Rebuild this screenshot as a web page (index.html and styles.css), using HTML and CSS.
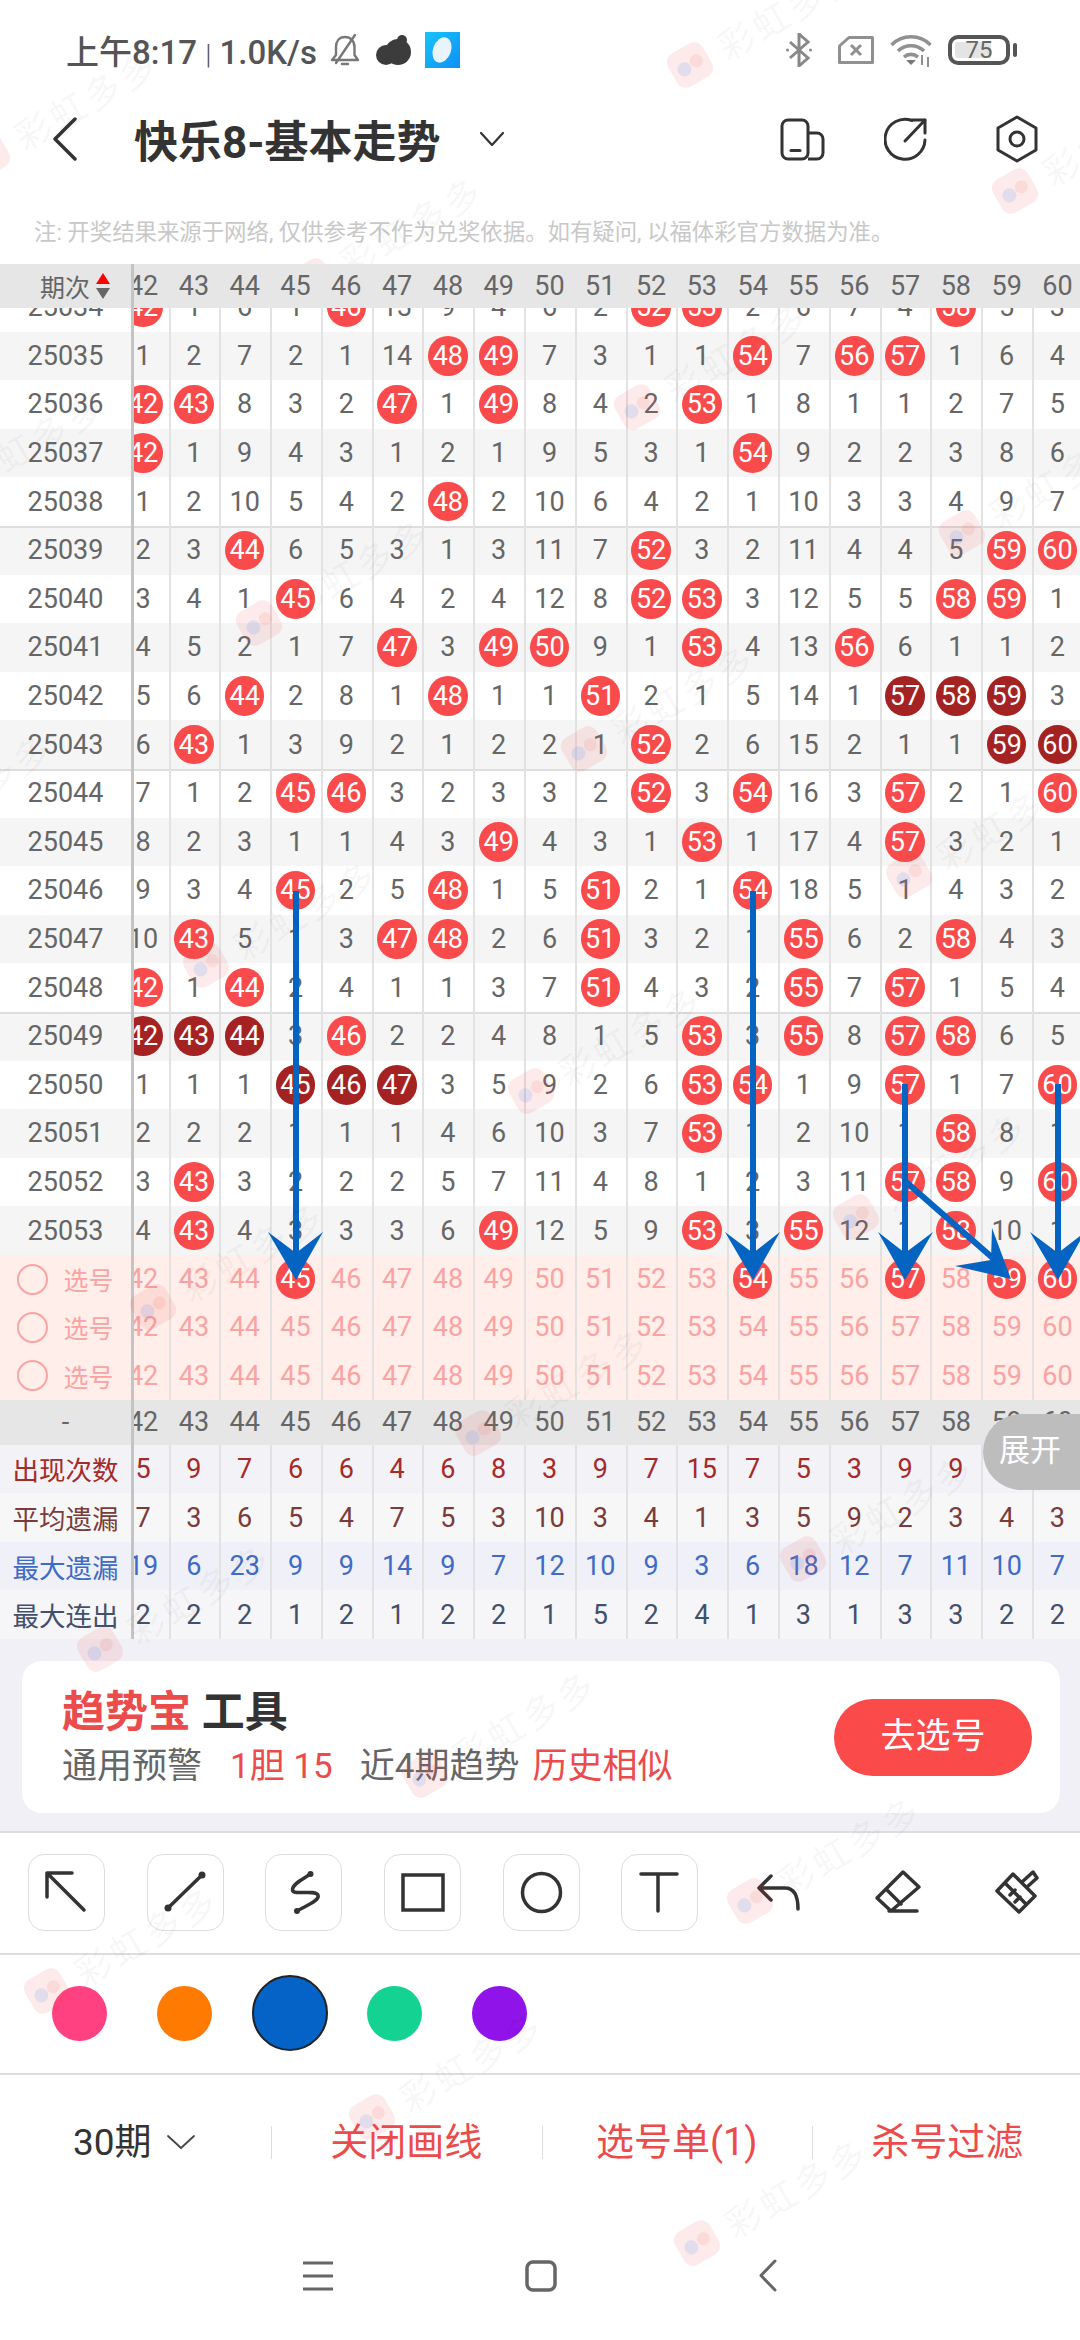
FILE: index.html
```html
<!DOCTYPE html>
<html lang="zh-CN">
<head>
    <meta charset="UTF-8">
    <title>快乐8-基本走势</title>
    <link rel="stylesheet" href="styles.css">
</head>
<body>

    <div class="statusbar">
        <span class="status-text">上午8:17 <span class="status-sep">|</span> 1.0K/s</span>
        <svg class="ic-bell" width="30" height="34" viewBox="0 0 30 34" fill="none" stroke="#777" stroke-width="2.400" stroke-linejoin="round" stroke-linecap="round">
            <path d="M2 27h26l-3.500-5V14c0-6-4-10-9.500-10S6 8 6 14v8z"/>
            <path d="M12 31h6"/>
            <path d="M25 2L6 30"/>
        </svg>
        <svg class="ic-cloud" width="36" height="30" viewBox="0 0 36 30" fill="#3c3c3c">
            <circle cx="11" cy="20" r="10"/>
            <circle cx="23" cy="17" r="13"/>
            <circle cx="27" cy="5" r="5"/>
        </svg>
        <svg class="ic-app" width="35" height="36" viewBox="0 0 35 36">
            <defs>
                <linearGradient id="appfill" x1="0" y1="0" x2="1" y2="1">
                    <stop offset="0" stop-color="#18c4f8"/>
                    <stop offset="1" stop-color="#0f8ff5"/>
                </linearGradient>
            </defs>
            <rect width="35" height="36" fill="url(#appfill)"/>
            <ellipse cx="17" cy="18" rx="9" ry="13" transform="rotate(20 17 18)" fill="#e8f5fe"/>
        </svg>

        <div class="status-right">
            <svg class="ic-bt" width="28" height="34" viewBox="0 0 28 34" fill="none" stroke="#888" stroke-width="3">
                <path d="M5 9l18 16-9 8V1l9 8L5 25"/>
                <circle cx="2.500" cy="17" r="1.500" fill="#888" stroke="none"/>
                <circle cx="25.500" cy="17" r="1.500" fill="#888" stroke="none"/>
            </svg>
            <svg width="36" height="28" viewBox="0 0 36 28" fill="none" stroke="#909090" stroke-width="3" stroke-linejoin="round">
                <path d="M11 1.500h23.500v25H1.500V10z"/>
                <path d="M13 9l10 10M23 9L13 19"/>
            </svg>
            <svg width="42" height="34" viewBox="0 0 42 34" fill="none" stroke="#909090" stroke-width="3.600">
                <path d="M1.500 12C12 1 30 1 40.500 12"/>
                <path d="M8 18c7-7 19-7 26 0"/>
                <path d="M14 24c4-3.500 10-3.500 14 0"/>
                <path d="M21 31.500l-4-4h8z" fill="#777" stroke="#777" stroke-width="1"/>
                <path d="M32 22v10M38 24v10" stroke-width="2"/>
            </svg>
            <div class="battery">75</div>
        </div>
    </div>

    <div class="topnav">
        <svg class="ic-back" width="30" height="44" viewBox="0 0 30 44" fill="none" stroke="#333" stroke-width="3.500" stroke-linecap="round" stroke-linejoin="round">
            <path d="M25 2L5 22l20 20"/>
        </svg>
        <h1 class="page-title">快乐8-基本走势</h1>
        <svg class="ic-caret" width="26" height="16" viewBox="0 0 26 16" fill="none" stroke="#333" stroke-width="2.200" stroke-linecap="round" stroke-linejoin="round">
            <path d="M2 2l11 12L24 2"/>
        </svg>
        <div class="topnav-right">
            <svg width="46" height="44" viewBox="0 0 46 44" fill="none" stroke="#333" stroke-width="3" stroke-linejoin="round">
                <rect x="2" y="3" width="26" height="39" rx="6"/>
                <path d="M28 16h9a6 6 0 0 1 6 6v14a6 6 0 0 1-6 6H28"/>
                <path d="M11 33.500h9" stroke-linecap="round"/>
            </svg>
            <svg width="46" height="46" viewBox="0 0 46 46" fill="none" stroke="#333" stroke-width="3" stroke-linecap="round" stroke-linejoin="round">
                <path d="M28 4.500A20 20 0 1 0 41 24"/>
                <path d="M21 25L41 4"/>
                <path d="M28 4h13v13"/>
            </svg>
            <svg class="ic-hex" width="44" height="48" viewBox="0 0 44 48" fill="none" stroke="#333" stroke-width="3" stroke-linejoin="round">
                <path d="M22 2l19 11v22L22 46 3 35V13z"/>
                <circle cx="22" cy="24" r="7"/>
            </svg>
        </div>
    </div>

    <p class="notice">注: 开奖结果来源于网络, 仅供参考不作为兑奖依据。如有疑问, 以福体彩官方数据为准。</p>

    <div class="chart">
        <div id="chartHead" class="row row-head"></div>
        <div id="chartBody" class="chart-body"></div>
        <div class="expand">展开</div>
    </div>

    <div class="promo-wrap">
        <div class="promo">
            <div class="promo-info">
                <div class="promo-title"><span class="red">趋势宝</span> 工具</div>
                <div class="promo-sub">
                    <span>通用预警</span>
                    <span class="red promo-num">1胆 15</span>
                    <span>近4期趋势</span>
                    <span class="red">历史相似</span>
                </div>
            </div>
            <div class="promo-btn">去选号</div>
        </div>
    </div>

    <div class="tools">
        <div class="tool boxed">
            <svg viewBox="0 0 77 77"><path d="M19 43V19h25M19 19l37 37"/></svg>
        </div>
        <div class="tool boxed">
            <svg viewBox="0 0 77 77"><path d="M55 21L21 54"/><circle class="dot" cx="55" cy="21" r="3.500"/><circle class="dot" cx="21" cy="54" r="3.500"/></svg>
        </div>
        <div class="tool boxed">
            <svg viewBox="0 0 77 77"><path d="M45.500 20C38 25 27 30 27.500 36 28 42 50 35 53 41 55 47 40 52 32 57"/><circle class="dot" cx="45.500" cy="20" r="3"/><circle class="dot" cx="32" cy="57" r="3"/></svg>
        </div>
        <div class="tool boxed">
            <svg viewBox="0 0 77 77"><rect class="sharp" x="19" y="21" width="40" height="35"/></svg>
        </div>
        <div class="tool boxed">
            <svg viewBox="0 0 77 77"><circle cx="38.500" cy="38.500" r="19"/></svg>
        </div>
        <div class="tool boxed">
            <svg viewBox="0 0 77 77"><path d="M20 20h36M37 20v37"/></svg>
        </div>
        <div class="tool">
            <svg viewBox="0 0 77 77"><path d="M31 22L19 34l12 12M19 34h26c8 0 13 6 13 21"/></svg>
        </div>
        <div class="tool">
            <svg viewBox="0 0 77 77"><path d="M44 18l16 15-28 24-14-13zM28 36l14 14M30 57h28"/></svg>
        </div>
        <div class="tool">
            <svg viewBox="0 0 77 77"><path d="M35 20l22 22-16 16-22-21zM44 28l11-10 4 6-10 9M27 29l21 21M32 41l5-5M37 48l5-5"/></svg>
        </div>
    </div>

    <div class="swatches">
        <span class="swatch c-pink"></span>
        <span class="swatch c-orange"></span>
        <span class="swatch c-blue active"></span>
        <span class="swatch c-green"></span>
        <span class="swatch c-purple"></span>
    </div>

    <div class="actions">
        <div class="action period">30期
            <svg width="30" height="16" viewBox="0 0 30 16" fill="none" stroke="#444" stroke-width="1.800" stroke-linecap="round" stroke-linejoin="round"><path d="M2 2l13 12L28 2"/></svg>
        </div>
        <div class="action red">关闭画线</div>
        <div class="action red">选号单(1)</div>
        <div class="action red">杀号过滤</div>
    </div>

    <div class="navbar">
        <svg width="32" height="30" viewBox="0 0 32 30" fill="none" stroke="#666" stroke-width="3">
            <path d="M1 2h30M1 15h30M1 28h30"/>
        </svg>
        <svg width="32" height="32" viewBox="0 0 32 32" fill="none" stroke="#666" stroke-width="3.500">
            <rect x="2" y="2" width="28" height="28" rx="6"/>
        </svg>
        <svg class="ic-navback" width="20" height="33" viewBox="0 0 20 33" fill="none" stroke="#666" stroke-width="3" stroke-linecap="round" stroke-linejoin="round">
            <path d="M17 2L3 16.500 17 31"/>
        </svg>
    </div>

    <!-- 画线 -->
    <svg class="drawing" width="1080" height="2340" viewBox="0 0 1080 2340">
        <g stroke="#0563c1" stroke-width="6" fill="#0563c1">
            <path d="M296 891V1255"/>
            <path d="M753 891V1255"/>
            <path d="M905 1084V1255"/>
            <path d="M1058 1084V1255"/>
            <path d="M905 1181L995 1260"/>
        </g>
        <g fill="#0563c1">
            <path d="M268 1232L296 1253 323 1232 296 1280z"/>
            <path d="M725 1232L753 1253 780 1232 753 1280z"/>
            <path d="M878 1232L905 1253 933 1232 905 1280z"/>
            <path d="M1030 1232L1058 1253 1085 1232 1058 1280z"/>
            <path d="M992 1228L991 1260 955 1266 1011 1279z"/>
        </g>
    </svg>

    <div id="watermarks" class="watermarks"></div>

    <script src="script.js"></script>
</body>
</html>
```

FILE: styles.css
```css
body {
    margin: 0;
    width: 1080px;
    height: 2340px;
    overflow: hidden;
    position: relative;
    background-color: #fff;
    color: #333;
    font-family: Roboto, "Noto Sans CJK SC", sans-serif;
}

.red {
    color: #ec4b4b;
}

/* 状态栏 */
.statusbar {
    height: 100px;
    display: flex;
    align-items: center;
    padding: 0 70px 0 66px;
    box-sizing: border-box;
}
.status-text {
    font-size: 33px;
    font-weight: 500;
    color: #555;
    white-space: nowrap;
    width: 254px;
}
.status-sep {
    font-weight: 300;
    font-size: 28px;
}
.ic-bell {
    margin-left: 10px;
}
.ic-cloud {
    margin-left: 15px;
}
.ic-app {
    margin-left: 14px;
}
.status-right {
    margin-left: auto;
    display: flex;
    align-items: center;
    gap: 16px;
}
.ic-bt {
    margin-right: 9px;
}
.battery {
    position: relative;
    width: 62px;
    height: 30px;
    box-sizing: border-box;
    border: 4px solid #555;
    border-radius: 10px;
    background: linear-gradient(90deg, #e4e4e4 0, #e4e4e4 72%, #fff 72%);
    background-clip: content-box;
    padding: 3px;
    font-size: 24px;
    line-height: 16px;
    text-align: center;
    color: #666;
}
.battery::after {
    content: "";
    position: absolute;
    right: -11px;
    top: 4px;
    width: 4px;
    height: 14px;
    background-color: #555;
    border-radius: 2px;
}

/* 标题 */
.topnav {
    height: 78px;
    display: flex;
    align-items: center;
    padding: 0 41px 0 50px;
}
.page-title {
    margin: 0 0 0 54px;
    font-size: 44px;
    font-weight: 700;
    color: #333;
    white-space: nowrap;
}
.ic-caret {
    margin-left: 38px;
}
.topnav-right {
    margin-left: auto;
    display: flex;
    align-items: center;
    gap: 58px;
}
.ic-hex {
    margin-left: 7px;
}

.notice {
    margin: 0;
    height: 86px;
    box-sizing: border-box;
    padding: 37px 0 0 34px;
    font-size: 22.400px;
    line-height: 34px;
    color: #c8c8c8;
    white-space: nowrap;
}

/* 走势表 */
.chart {
    position: relative;
    height: 1375px;
    overflow: hidden;
}
.chart-body {
    margin-top: -25px;
}
.row {
    display: flex;
    height: 48.600px;
    font-size: 27px;
    color: #666;
    background-color: #fff;
}
.row.alt {
    background-color: #f5f5f5;
}
.row.split {
    box-shadow: inset 0 2px 0 #ddd;
}
.row-head {
    position: relative;
    z-index: 1;
    height: 44px;
    background-color: #e6e6e6;
}
.row-foot {
    height: 44.600px;
    background-color: #e6e6e6;
}
.label {
    flex: 0 0 131px;
    display: flex;
    align-items: center;
    justify-content: center;
    white-space: nowrap;
}
.sort {
    display: flex;
    flex-direction: column;
    gap: 4px;
    margin-left: 6px;
}
.sort i {
    width: 0;
    height: 0;
    border-left: 7px solid transparent;
    border-right: 7px solid transparent;
}
.sort .up {
    border-bottom: 11px solid #f00;
}
.sort .down {
    border-top: 11px solid #666;
}
.head-label {
    font-size: 25px;
    box-sizing: border-box;
    padding-left: 19px;
}
.cells {
    flex: 1;
    min-width: 0;
    overflow: hidden;
    border-left: 3px solid #c4c4c4;
}
.track {
    display: flex;
    height: 100%;
    margin-left: -16.300px;
}
.cell {
    flex: 0 0 50.800px;
    display: flex;
    align-items: center;
    justify-content: center;
    box-shadow: inset 2px 0 0 #e2e2e2;
}
.row-head .cell,
.row-foot .cell {
    box-shadow: none;
}
.ball {
    width: 39.500px;
    height: 39.500px;
    border-radius: 50%;
    background-color: #f94b4b;
    color: #fff;
    display: flex;
    align-items: center;
    justify-content: center;
}
.ball.dark {
    background-color: #a52222;
}

/* 选号 */
.row-pick {
    height: 48.400px;
    background-color: #ffeee9;
    color: #f9a3a3;
}
.pick-label {
    font-size: 25px;
    gap: 15px;
    box-sizing: border-box;
}
.pick-circle {
    width: 31px;
    height: 31px;
    box-sizing: border-box;
    border: 2px solid #f9a3a3;
    border-radius: 50%;
}

/* 统计 */
.row-stat .label {
    font-size: 26.500px;
}
.stat-count {
    background-color: #f2f2f7;
    color: #a52a2a;
}
.stat-avg {
    background-color: #f7f7f7;
    color: #7a3b3b;
}
.stat-max {
    background-color: #f0f0f8;
    color: #3f6bc4;
}
.stat-run {
    background-color: #f6f6f8;
    color: #44506b;
}

.expand {
    position: absolute;
    right: 0;
    top: 1150px;
    z-index: 1;
    width: 97px;
    height: 76px;
    box-sizing: border-box;
    padding-left: 16px;
    background-color: #bdbdbd;
    border-radius: 38px 0 0 38px;
    color: #fff;
    font-size: 31px;
    line-height: 74px;
}

/* 趋势宝 */
.promo-wrap {
    height: 194px;
    box-sizing: border-box;
    padding: 22px 20px 20px 22px;
    background-color: #f0f0f6;
    border-bottom: 2px solid #ddd;
}
.promo {
    height: 152px;
    box-sizing: border-box;
    background-color: #fff;
    border-radius: 20px;
    display: flex;
    align-items: center;
    justify-content: space-between;
    padding: 0 28px 0 40px;
}
.promo-title {
    font-size: 43px;
    font-weight: 700;
    line-height: 56px;
    color: #333;
}
.promo-sub {
    display: flex;
    margin-top: 4px;
    font-size: 35px;
    line-height: 46px;
    color: #666;
}
.promo-num {
    margin: 0 27px 0 28px;
}
.promo-sub span:last-child {
    margin-left: 13px;
}
.promo-btn {
    width: 198px;
    height: 77px;
    border-radius: 39px;
    background-color: #fb4a4a;
    color: #fff;
    font-size: 35px;
    line-height: 75px;
    text-align: center;
}

/* 画线工具 */
.tools {
    height: 122px;
    box-sizing: border-box;
    display: flex;
    align-items: center;
    gap: 41.700px;
    padding: 0 0 2px 28px;
    border-bottom: 2px solid #ddd;
}
.tool {
    flex: 0 0 77px;
    height: 77px;
    box-sizing: border-box;
}
.tool.boxed {
    border: 1px solid #ddd;
    border-radius: 16px;
}
.tool svg {
    display: block;
    width: 77px;
    height: 77px;
    fill: none;
    stroke: #333;
    stroke-width: 3.500;
    stroke-linecap: round;
    stroke-linejoin: round;
}
.tool.boxed svg {
    margin: -1px;
}
.tool svg .dot {
    fill: #333;
    stroke: none;
}
.tool svg .sharp {
    stroke-linejoin: miter;
}

.swatches {
    height: 120px;
    box-sizing: border-box;
    display: flex;
    align-items: center;
    padding: 0 0 2px 52px;
    border-bottom: 2px solid #ddd;
}
.swatch {
    flex: 0 0 55px;
    height: 55px;
    margin-right: 50px;
    box-sizing: border-box;
    border-radius: 50%;
}
.swatch.active {
    flex: 0 0 76px;
    height: 76px;
    margin: 0 39px 0 -10px;
    border: 2px solid #222;
}
.c-pink {
    background-color: #ff4081;
}
.c-orange {
    background-color: #ff7a00;
}
.c-blue {
    background-color: #0563c8;
}
.c-green {
    background-color: #14d291;
}
.c-purple {
    background-color: #9013ea;
}

/* 底部按钮 */
.actions {
    height: 134px;
    display: flex;
    align-items: center;
    font-size: 38px;
}
.action {
    flex: 0 0 270.500px;
    height: 33px;
    line-height: 33px;
    text-align: center;
    box-shadow: inset 1px 0 0 #ddd;
    white-space: nowrap;
}
.action.period {
    box-shadow: none;
    font-size: 37px;
    color: #333;
    display: flex;
    align-items: center;
    padding-left: 73px;
    box-sizing: border-box;
    gap: 14px;
    flex-basis: 271px;
}

.navbar {
    position: absolute;
    left: 302px;
    top: 2259px;
    display: flex;
    align-items: center;
    gap: 191px;
}
.ic-navback {
    margin-left: 10px;
}

/* 覆盖层 */
.drawing {
    position: absolute;
    left: 0;
    top: 0;
    pointer-events: none;
}
.watermarks {
    position: absolute;
    left: 0;
    top: 0;
    width: 1080px;
    height: 2340px;
    overflow: hidden;
    pointer-events: none;
}
.wm {
    position: absolute;
    width: 240px;
    height: 40px;
    display: flex;
    align-items: center;
    gap: 14px;
    transform: rotate(-30deg);
    transform-origin: 20px 20px;
    font-size: 36px;
    letter-spacing: 4px;
    color: rgba(0, 0, 0, 0.05);
    white-space: nowrap;
}
.wm-logo {
    position: relative;
    flex: 0 0 40px;
    height: 38px;
    border-radius: 10px;
    background-color: rgba(240, 70, 70, 0.11);
}
.wm-logo::before {
    content: "";
    position: absolute;
    left: 6px;
    top: 13px;
    width: 14px;
    height: 14px;
    border-radius: 50%;
    background-color: rgba(90, 150, 240, 0.16);
}
.wm-logo::after {
    content: "";
    position: absolute;
    left: 21px;
    top: 12px;
    width: 13px;
    height: 13px;
    border-radius: 50%;
    background-color: rgba(240, 70, 70, 0.1);
}
```

FILE: script.js
```js
const firstCol = 42;
const colCount = 19;

const draws = {
    25034: [42, 1, 6, 1, 46, 13, 9, 4, 6, 2, 52, 53, 2, 6, 7, 4, 58, 5, 3],
    25035: [1, 2, 7, 2, 1, 14, 48, 49, 7, 3, 1, 1, 54, 7, 56, 57, 1, 6, 4],
    25036: [42, 43, 8, 3, 2, 47, 1, 49, 8, 4, 2, 53, 1, 8, 1, 1, 2, 7, 5],
    25037: [42, 1, 9, 4, 3, 1, 2, 1, 9, 5, 3, 1, 54, 9, 2, 2, 3, 8, 6],
    25038: [1, 2, 10, 5, 4, 2, 48, 2, 10, 6, 4, 2, 1, 10, 3, 3, 4, 9, 7],
    25039: [2, 3, 44, 6, 5, 3, 1, 3, 11, 7, 52, 3, 2, 11, 4, 4, 5, 59, 60],
    25040: [3, 4, 1, 45, 6, 4, 2, 4, 12, 8, 52, 53, 3, 12, 5, 5, 58, 59, 1],
    25041: [4, 5, 2, 1, 7, 47, 3, 49, 50, 9, 1, 53, 4, 13, 56, 6, 1, 1, 2],
    25042: [5, 6, 44, 2, 8, 1, 48, 1, 1, 51, 2, 1, 5, 14, 1, 57, 58, 59, 3],
    25043: [6, 43, 1, 3, 9, 2, 1, 2, 2, 1, 52, 2, 6, 15, 2, 1, 1, 59, 60],
    25044: [7, 1, 2, 45, 46, 3, 2, 3, 3, 2, 52, 3, 54, 16, 3, 57, 2, 1, 60],
    25045: [8, 2, 3, 1, 1, 4, 3, 49, 4, 3, 1, 53, 1, 17, 4, 57, 3, 2, 1],
    25046: [9, 3, 4, 45, 2, 5, 48, 1, 5, 51, 2, 1, 54, 18, 5, 1, 4, 3, 2],
    25047: [10, 43, 5, 1, 3, 47, 48, 2, 6, 51, 3, 2, 1, 55, 6, 2, 58, 4, 3],
    25048: [42, 1, 44, 2, 4, 1, 1, 3, 7, 51, 4, 3, 2, 55, 7, 57, 1, 5, 4],
    25049: [42, 43, 44, 3, 46, 2, 2, 4, 8, 1, 5, 53, 3, 55, 8, 57, 58, 6, 5],
    25050: [1, 1, 1, 45, 46, 47, 3, 5, 9, 2, 6, 53, 54, 1, 9, 57, 1, 7, 60],
    25051: [2, 2, 2, 1, 1, 1, 4, 6, 10, 3, 7, 53, 1, 2, 10, 1, 58, 8, 1],
    25052: [3, 43, 3, 2, 2, 2, 5, 7, 11, 4, 8, 1, 2, 3, 11, 57, 58, 9, 60],
    25053: [4, 43, 4, 3, 3, 3, 6, 49, 12, 5, 9, 53, 3, 55, 12, 1, 58, 10, 1]
};

// 连号用深色
const darkBalls = {
    25042: [57, 58, 59],
    25043: [59, 60],
    25049: [42, 43, 44],
    25050: [45, 46, 47]
};

const stats = [
    { name: "出现次数", cls: "stat-count", values: [5, 9, 7, 6, 6, 4, 6, 8, 3, 9, 7, 15, 7, 5, 3, 9, 9, 5, 5] },
    { name: "平均遗漏", cls: "stat-avg", values: [7, 3, 6, 5, 4, 7, 5, 3, 10, 3, 4, 1, 3, 5, 9, 2, 3, 4, 3] },
    { name: "最大遗漏", cls: "stat-max", values: [19, 6, 23, 9, 9, 14, 9, 7, 12, 10, 9, 3, 6, 18, 12, 7, 11, 10, 7] },
    { name: "最大连出", cls: "stat-run", values: [2, 2, 2, 1, 2, 1, 2, 2, 1, 5, 2, 4, 1, 3, 1, 3, 3, 2, 2] }
];

const picks = [[45, 54, 57, 59, 60], [], []];
const colNumbers = Array.from({ length: colCount }, (_, i) => firstCol + i);

function ballHtml(value, dark) {
    return `<span class="ball${dark ? " dark" : ""}">${value}</span>`;
}

function rowHtml(cls, label, cells) {
    const cellHtml = cells.map(c => `<span class="cell">${c}</span>`).join("");
    return `<div class="row ${cls}">${label}<div class="cells"><div class="track">${cellHtml}</div></div></div>`;
}

document.getElementById("chartHead").innerHTML =
    `<div class="label head-label">期次<span class="sort"><i class="up"></i><i class="down"></i></span></div>` +
    `<div class="cells"><div class="track">${colNumbers.map(n => `<span class="cell">${n}</span>`).join("")}</div></div>`;

let html = "";

Object.keys(draws).forEach((issue, idx) => {
    const dark = darkBalls[issue] || [];
    const cells = draws[issue].map((v, i) =>
        v === colNumbers[i] ? ballHtml(v, dark.includes(v)) : v
    );
    let cls = idx % 2 === 1 ? "alt" : "";
    // 每5期一条分隔线
    if (idx % 5 === 0 && idx > 0) cls += " split";
    html += rowHtml(cls, `<div class="label">${issue}</div>`, cells);
});

picks.forEach(chosen => {
    const cells = colNumbers.map(n => chosen.includes(n) ? ballHtml(n, false) : n);
    const label = `<div class="label pick-label"><span class="pick-circle"></span>选号</div>`;
    html += rowHtml("row-pick", label, cells);
});

html += rowHtml("row-foot", `<div class="label">-</div>`, colNumbers);

stats.forEach(s => {
    html += rowHtml("row-stat " + s.cls, `<div class="label">${s.name}</div>`, s.values);
});

document.getElementById("chartBody").innerHTML = html;

// 水印
const wmBox = document.getElementById("watermarks");
for (let i = -4; i < 12; i++) {
    for (let j = -10; j < 5; j++) {
        const x = 690 + 325 * i + 378 * j;
        const y = 65 + 126 * i - 216 * j;
        if (x < -200 || x > 1060 || y < 10 || y > 2320) continue;
        const wm = document.createElement("div");
        wm.className = "wm";
        wm.style.left = (x - 20) + "px";
        wm.style.top = (y - 20) + "px";
        wm.innerHTML = `<span class="wm-logo"></span>彩虹多多`;
        wmBox.appendChild(wm);
    }
}
```
